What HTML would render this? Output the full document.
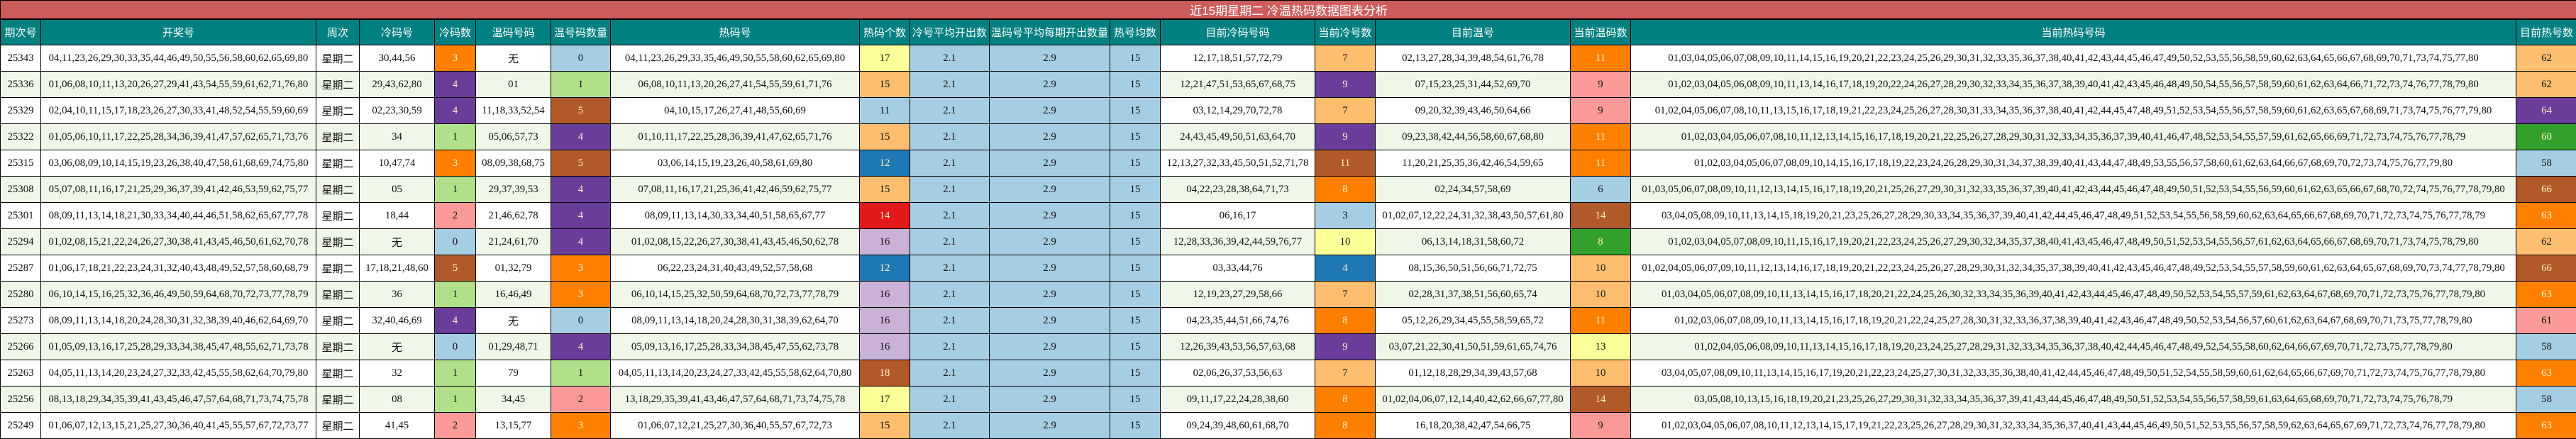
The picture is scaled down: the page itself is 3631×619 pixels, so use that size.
<!DOCTYPE html>
<html><head><meta charset="utf-8"><style>
html,body{margin:0;padding:0;background:#fff;}
body{width:3631px;height:618px;overflow:hidden;}
table{border-collapse:collapse;table-layout:fixed;width:3631px;font-family:"Liberation Serif","Noto Sans CJK SC",serif;font-size:14.8px;color:#111;}
td{border:1px solid #000;text-align:center;white-space:nowrap;overflow:hidden;padding:0;}
tr.t td{background:#CD5C5C;color:#fff;height:25px;font-family:"Liberation Sans","Noto Sans CJK SC",sans-serif;font-size:17px;border-bottom:2px solid #000;}
tr.h td{background:#008080;color:#fff;height:35px;font-family:"Liberation Sans","Noto Sans CJK SC",sans-serif;font-size:15px;}
tr.d td{height:36px;}
tr.d:nth-child(even) td{background:#F0F6E8;}
tr.d td.w{font-family:"Noto Sans CJK SC",sans-serif;font-size:15px;}
tr.d td.o{background:#FF8000;color:#FFF0C8}
tr.d td.p{background:#6A3D9A;color:#FFF0C8}
tr.d td.lb{background:#A6CEE3}
tr.d td.lg{background:#B2DF8A}
tr.d td.br{background:#B15928;color:#FFF0C8}
tr.d td.pk{background:#FB9A99}
tr.d td.lo{background:#FDBF6F}
tr.d td.y{background:#FFFF99}
tr.d td.b{background:#1F78B4;color:#FFF0C8}
tr.d td.r{background:#E31A1C;color:#FFF0C8}
tr.d td.lv{background:#CAB2D6}
tr.d td.g{background:#33A02C;color:#FFF0C8}
</style></head><body>
<table>
<colgroup>
<col style="width:57px"><col style="width:388px"><col style="width:61px"><col style="width:106px"><col style="width:58px"><col style="width:106px"><col style="width:84px"><col style="width:351px"><col style="width:71px"><col style="width:112px"><col style="width:170px"><col style="width:71px"><col style="width:218px"><col style="width:85px"><col style="width:275px"><col style="width:85px"><col style="width:1248px"><col style="width:86px">
</colgroup>
<tr class="t"><td colspan="18">近15期星期二 冷温热码数据图表分析</td></tr>
<tr class="h"><td>期次号</td><td>开奖号</td><td>周次</td><td>冷码号</td><td>冷码数</td><td>温码号码</td><td>温号码数量</td><td>热码号</td><td>热码个数</td><td>冷号平均开出数</td><td>温码号平均每期开出数量</td><td>热号均数</td><td>目前冷码号码</td><td>当前冷号数</td><td>目前温号</td><td>当前温码数</td><td>当前热码号码</td><td>目前热号数</td></tr>
<tr class="d"><td>25343</td><td>04,11,23,26,29,30,33,35,44,46,49,50,55,56,58,60,62,65,69,80</td><td class="w">星期二</td><td>30,44,56</td><td class="o">3</td><td class="w">无</td><td class="lb">0</td><td>04,11,23,26,29,33,35,46,49,50,55,58,60,62,65,69,80</td><td class="y">17</td><td class="lb">2.1</td><td class="lb">2.9</td><td class="lb">15</td><td>12,17,18,51,57,72,79</td><td class="lo">7</td><td>02,13,27,28,34,39,48,54,61,76,78</td><td class="o">11</td><td>01,03,04,05,06,07,08,09,10,11,14,15,16,19,20,21,22,23,24,25,26,29,30,31,32,33,35,36,37,38,40,41,42,43,44,45,46,47,49,50,52,53,55,56,58,59,60,62,63,64,65,66,67,68,69,70,71,73,74,75,77,80</td><td class="lo">62</td></tr>
<tr class="d"><td>25336</td><td>01,06,08,10,11,13,20,26,27,29,41,43,54,55,59,61,62,71,76,80</td><td class="w">星期二</td><td>29,43,62,80</td><td class="p">4</td><td>01</td><td class="lg">1</td><td>06,08,10,11,13,20,26,27,41,54,55,59,61,71,76</td><td class="lo">15</td><td class="lb">2.1</td><td class="lb">2.9</td><td class="lb">15</td><td>12,21,47,51,53,65,67,68,75</td><td class="p">9</td><td>07,15,23,25,31,44,52,69,70</td><td class="pk">9</td><td>01,02,03,04,05,06,08,09,10,11,13,14,16,17,18,19,20,22,24,26,27,28,29,30,32,33,34,35,36,37,38,39,40,41,42,43,45,46,48,49,50,54,55,56,57,58,59,60,61,62,63,64,66,71,72,73,74,76,77,78,79,80</td><td class="lo">62</td></tr>
<tr class="d"><td>25329</td><td>02,04,10,11,15,17,18,23,26,27,30,33,41,48,52,54,55,59,60,69</td><td class="w">星期二</td><td>02,23,30,59</td><td class="p">4</td><td>11,18,33,52,54</td><td class="br">5</td><td>04,10,15,17,26,27,41,48,55,60,69</td><td class="lb">11</td><td class="lb">2.1</td><td class="lb">2.9</td><td class="lb">15</td><td>03,12,14,29,70,72,78</td><td class="lo">7</td><td>09,20,32,39,43,46,50,64,66</td><td class="pk">9</td><td>01,02,04,05,06,07,08,10,11,13,15,16,17,18,19,21,22,23,24,25,26,27,28,30,31,33,34,35,36,37,38,40,41,42,44,45,47,48,49,51,52,53,54,55,56,57,58,59,60,61,62,63,65,67,68,69,71,73,74,75,76,77,79,80</td><td class="p">64</td></tr>
<tr class="d"><td>25322</td><td>01,05,06,10,11,17,22,25,28,34,36,39,41,47,57,62,65,71,73,76</td><td class="w">星期二</td><td>34</td><td class="lg">1</td><td>05,06,57,73</td><td class="p">4</td><td>01,10,11,17,22,25,28,36,39,41,47,62,65,71,76</td><td class="lo">15</td><td class="lb">2.1</td><td class="lb">2.9</td><td class="lb">15</td><td>24,43,45,49,50,51,63,64,70</td><td class="p">9</td><td>09,23,38,42,44,56,58,60,67,68,80</td><td class="o">11</td><td>01,02,03,04,05,06,07,08,10,11,12,13,14,15,16,17,18,19,20,21,22,25,26,27,28,29,30,31,32,33,34,35,36,37,39,40,41,46,47,48,52,53,54,55,57,59,61,62,65,66,69,71,72,73,74,75,76,77,78,79</td><td class="g">60</td></tr>
<tr class="d"><td>25315</td><td>03,06,08,09,10,14,15,19,23,26,38,40,47,58,61,68,69,74,75,80</td><td class="w">星期二</td><td>10,47,74</td><td class="o">3</td><td>08,09,38,68,75</td><td class="br">5</td><td>03,06,14,15,19,23,26,40,58,61,69,80</td><td class="b">12</td><td class="lb">2.1</td><td class="lb">2.9</td><td class="lb">15</td><td>12,13,27,32,33,45,50,51,52,71,78</td><td class="br">11</td><td>11,20,21,25,35,36,42,46,54,59,65</td><td class="o">11</td><td>01,02,03,04,05,06,07,08,09,10,14,15,16,17,18,19,22,23,24,26,28,29,30,31,34,37,38,39,40,41,43,44,47,48,49,53,55,56,57,58,60,61,62,63,64,66,67,68,69,70,72,73,74,75,76,77,79,80</td><td class="lb">58</td></tr>
<tr class="d"><td>25308</td><td>05,07,08,11,16,17,21,25,29,36,37,39,41,42,46,53,59,62,75,77</td><td class="w">星期二</td><td>05</td><td class="lg">1</td><td>29,37,39,53</td><td class="p">4</td><td>07,08,11,16,17,21,25,36,41,42,46,59,62,75,77</td><td class="lo">15</td><td class="lb">2.1</td><td class="lb">2.9</td><td class="lb">15</td><td>04,22,23,28,38,64,71,73</td><td class="o">8</td><td>02,24,34,57,58,69</td><td class="lb">6</td><td>01,03,05,06,07,08,09,10,11,12,13,14,15,16,17,18,19,20,21,25,26,27,29,30,31,32,33,35,36,37,39,40,41,42,43,44,45,46,47,48,49,50,51,52,53,54,55,56,59,60,61,62,63,65,66,67,68,70,72,74,75,76,77,78,79,80</td><td class="br">66</td></tr>
<tr class="d"><td>25301</td><td>08,09,11,13,14,18,21,30,33,34,40,44,46,51,58,62,65,67,77,78</td><td class="w">星期二</td><td>18,44</td><td class="pk">2</td><td>21,46,62,78</td><td class="p">4</td><td>08,09,11,13,14,30,33,34,40,51,58,65,67,77</td><td class="r">14</td><td class="lb">2.1</td><td class="lb">2.9</td><td class="lb">15</td><td>06,16,17</td><td class="lb">3</td><td>01,02,07,12,22,24,31,32,38,43,50,57,61,80</td><td class="br">14</td><td>03,04,05,08,09,10,11,13,14,15,18,19,20,21,23,25,26,27,28,29,30,33,34,35,36,37,39,40,41,42,44,45,46,47,48,49,51,52,53,54,55,56,58,59,60,62,63,64,65,66,67,68,69,70,71,72,73,74,75,76,77,78,79</td><td class="o">63</td></tr>
<tr class="d"><td>25294</td><td>01,02,08,15,21,22,24,26,27,30,38,41,43,45,46,50,61,62,70,78</td><td class="w">星期二</td><td class="w">无</td><td class="lb">0</td><td>21,24,61,70</td><td class="p">4</td><td>01,02,08,15,22,26,27,30,38,41,43,45,46,50,62,78</td><td class="lv">16</td><td class="lb">2.1</td><td class="lb">2.9</td><td class="lb">15</td><td>12,28,33,36,39,42,44,59,76,77</td><td class="y">10</td><td>06,13,14,18,31,58,60,72</td><td class="g">8</td><td>01,02,03,04,05,07,08,09,10,11,15,16,17,19,20,21,22,23,24,25,26,27,29,30,32,34,35,37,38,40,41,43,45,46,47,48,49,50,51,52,53,54,55,56,57,61,62,63,64,65,66,67,68,69,70,71,73,74,75,78,79,80</td><td class="lo">62</td></tr>
<tr class="d"><td>25287</td><td>01,06,17,18,21,22,23,24,31,32,40,43,48,49,52,57,58,60,68,79</td><td class="w">星期二</td><td>17,18,21,48,60</td><td class="br">5</td><td>01,32,79</td><td class="o">3</td><td>06,22,23,24,31,40,43,49,52,57,58,68</td><td class="b">12</td><td class="lb">2.1</td><td class="lb">2.9</td><td class="lb">15</td><td>03,33,44,76</td><td class="b">4</td><td>08,15,36,50,51,56,66,71,72,75</td><td class="lo">10</td><td>01,02,04,05,06,07,09,10,11,12,13,14,16,17,18,19,20,21,22,23,24,25,26,27,28,29,30,31,32,34,35,37,38,39,40,41,42,43,45,46,47,48,49,52,53,54,55,57,58,59,60,61,62,63,64,65,67,68,69,70,73,74,77,78,79,80</td><td class="br">66</td></tr>
<tr class="d"><td>25280</td><td>06,10,14,15,16,25,32,36,46,49,50,59,64,68,70,72,73,77,78,79</td><td class="w">星期二</td><td>36</td><td class="lg">1</td><td>16,46,49</td><td class="o">3</td><td>06,10,14,15,25,32,50,59,64,68,70,72,73,77,78,79</td><td class="lv">16</td><td class="lb">2.1</td><td class="lb">2.9</td><td class="lb">15</td><td>12,19,23,27,29,58,66</td><td class="lo">7</td><td>02,28,31,37,38,51,56,60,65,74</td><td class="lo">10</td><td>01,03,04,05,06,07,08,09,10,11,13,14,15,16,17,18,20,21,22,24,25,26,30,32,33,34,35,36,39,40,41,42,43,44,45,46,47,48,49,50,52,53,54,55,57,59,61,62,63,64,67,68,69,70,71,72,73,75,76,77,78,79,80</td><td class="o">63</td></tr>
<tr class="d"><td>25273</td><td>08,09,11,13,14,18,20,24,28,30,31,32,38,39,40,46,62,64,69,70</td><td class="w">星期二</td><td>32,40,46,69</td><td class="p">4</td><td class="w">无</td><td class="lb">0</td><td>08,09,11,13,14,18,20,24,28,30,31,38,39,62,64,70</td><td class="lv">16</td><td class="lb">2.1</td><td class="lb">2.9</td><td class="lb">15</td><td>04,23,35,44,51,66,74,76</td><td class="o">8</td><td>05,12,26,29,34,45,55,58,59,65,72</td><td class="o">11</td><td>01,02,03,06,07,08,09,10,11,13,14,15,16,17,18,19,20,21,22,24,25,27,28,30,31,32,33,36,37,38,39,40,41,42,43,46,47,48,49,50,52,53,54,56,57,60,61,62,63,64,67,68,69,70,71,73,75,77,78,79,80</td><td class="pk">61</td></tr>
<tr class="d"><td>25266</td><td>01,05,09,13,16,17,25,28,29,33,34,38,45,47,48,55,62,71,73,78</td><td class="w">星期二</td><td class="w">无</td><td class="lb">0</td><td>01,29,48,71</td><td class="p">4</td><td>05,09,13,16,17,25,28,33,34,38,45,47,55,62,73,78</td><td class="lv">16</td><td class="lb">2.1</td><td class="lb">2.9</td><td class="lb">15</td><td>12,26,39,43,53,56,57,63,68</td><td class="p">9</td><td>03,07,21,22,30,41,50,51,59,61,65,74,76</td><td class="y">13</td><td>01,02,04,05,06,08,09,10,11,13,14,15,16,17,18,19,20,23,24,25,27,28,29,31,32,33,34,35,36,37,38,40,42,44,45,46,47,48,49,52,54,55,58,60,62,64,66,67,69,70,71,72,73,75,77,78,79,80</td><td class="lb">58</td></tr>
<tr class="d"><td>25263</td><td>04,05,11,13,14,20,23,24,27,32,33,42,45,55,58,62,64,70,79,80</td><td class="w">星期二</td><td>32</td><td class="lg">1</td><td>79</td><td class="lg">1</td><td>04,05,11,13,14,20,23,24,27,33,42,45,55,58,62,64,70,80</td><td class="br">18</td><td class="lb">2.1</td><td class="lb">2.9</td><td class="lb">15</td><td>02,06,26,37,53,56,63</td><td class="lo">7</td><td>01,12,18,28,29,34,39,43,57,68</td><td class="lo">10</td><td>03,04,05,07,08,09,10,11,13,14,15,16,17,19,20,21,22,23,24,25,27,30,31,32,33,35,36,38,40,41,42,44,45,46,47,48,49,50,51,52,54,55,58,59,60,61,62,64,65,66,67,69,70,71,72,73,74,75,76,77,78,79,80</td><td class="o">63</td></tr>
<tr class="d"><td>25256</td><td>08,13,18,29,34,35,39,41,43,45,46,47,57,64,68,71,73,74,75,78</td><td class="w">星期二</td><td>08</td><td class="lg">1</td><td>34,45</td><td class="pk">2</td><td>13,18,29,35,39,41,43,46,47,57,64,68,71,73,74,75,78</td><td class="y">17</td><td class="lb">2.1</td><td class="lb">2.9</td><td class="lb">15</td><td>09,11,17,22,24,28,38,60</td><td class="o">8</td><td>01,02,04,06,07,12,14,40,42,62,66,67,77,80</td><td class="br">14</td><td>03,05,08,10,13,15,16,18,19,20,21,23,25,26,27,29,30,31,32,33,34,35,36,37,39,41,43,44,45,46,47,48,49,50,51,52,53,54,55,56,57,58,59,61,63,64,65,68,69,70,71,72,73,74,75,76,78,79</td><td class="lb">58</td></tr>
<tr class="d"><td>25249</td><td>01,06,07,12,13,15,21,25,27,30,36,40,41,45,55,57,67,72,73,77</td><td class="w">星期二</td><td>41,45</td><td class="pk">2</td><td>13,15,77</td><td class="o">3</td><td>01,06,07,12,21,25,27,30,36,40,55,57,67,72,73</td><td class="lo">15</td><td class="lb">2.1</td><td class="lb">2.9</td><td class="lb">15</td><td>09,24,39,48,60,61,68,70</td><td class="o">8</td><td>16,18,20,38,42,47,54,66,75</td><td class="pk">9</td><td>01,02,03,04,05,06,07,08,10,11,12,13,14,15,17,19,21,22,23,25,26,27,28,29,30,31,32,33,34,35,36,37,40,41,43,44,45,46,49,50,51,52,53,55,56,57,58,59,62,63,64,65,67,69,71,72,73,74,76,77,78,79,80</td><td class="o">63</td></tr>
</table>
</body></html>
